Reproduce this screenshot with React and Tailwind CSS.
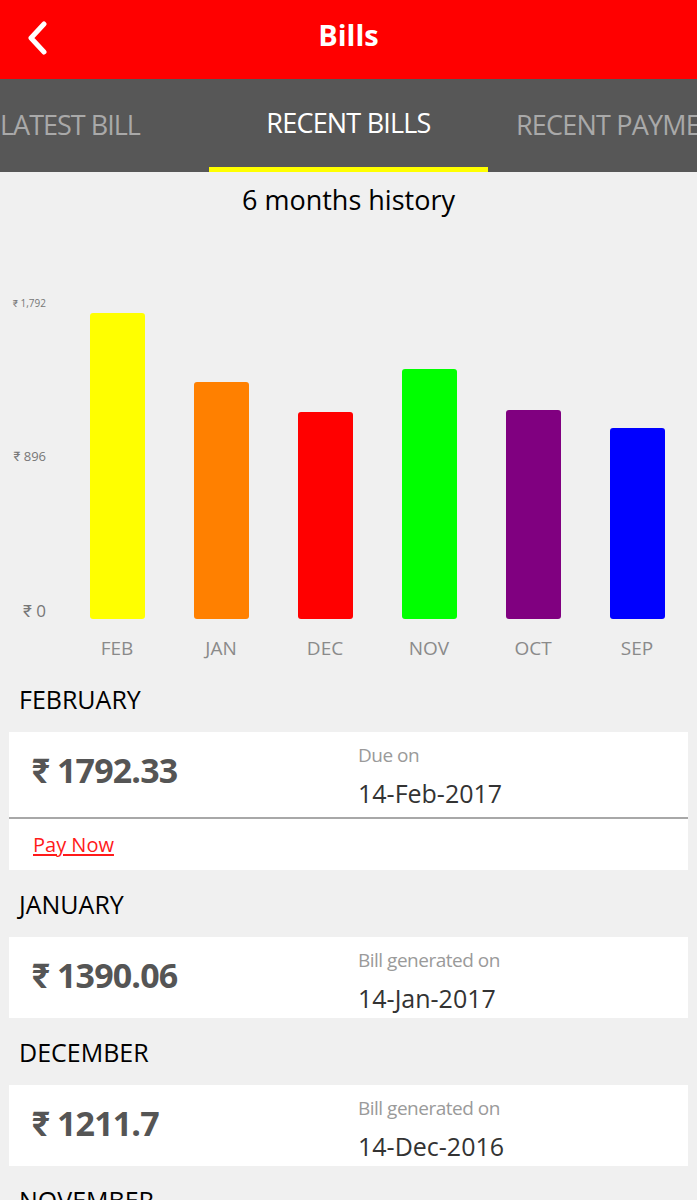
import React from "react";

const F = { fontFamily: "'Open Sans', Roboto, 'Noto Sans', sans-serif" };

const bars = [
  { m: "FEB", v: 1792.33, c: "bg-[#ffff00]" },
  { m: "JAN", v: 1390.06, c: "bg-[#ff8000]" },
  { m: "DEC", v: 1211.7, c: "bg-[#ff0000]" },
  { m: "NOV", v: 1464, c: "bg-[#00ff00]" },
  { m: "OCT", v: 1222, c: "bg-[#800080]" },
  { m: "SEP", v: 1119, c: "bg-[#0000ff]" },
];

function Card({ amount, label, date, pay }) {
  return (
    <div className="mx-[9px] bg-white">
      <div className={`flex ${pay ? "h-[87px] border-b-2 border-[#a8a8a8]" : "h-[81px]"}`}>
        <div className="w-[349px] pl-[23px] pt-[18px]">
          <div className="text-[34px] leading-[40px] font-bold text-[#555555] tracking-tight" style={F}>{amount}</div>
        </div>
        <div className="flex flex-col pt-[10px]">
          <span className="text-[19px] leading-[26px] text-[#9a9a9a] -tracking-[0.5px]" style={F}>{label}</span>
          <span className="mt-[8px] text-[25px] leading-[34px] text-[#333333]" style={F}>{date}</span>
        </div>
      </div>
      {pay && (
        <div className="h-[51px] pl-[24px] flex items-center">
          <span className="text-[20px] text-[#ff1a1a] underline underline-offset-2" style={F}>Pay Now</span>
        </div>
      )}
    </div>
  );
}

function Month({ children }) {
  return (
    <div className="h-[30px] pl-[19px] mt-[20px] mb-[17px] flex items-center text-[25px] text-black" style={F}>
      {children}
    </div>
  );
}

export default function App() {
  const maxH = 306;
  return (
    <div className="w-[697px] h-[1200px] overflow-hidden bg-[#f0f0f0]" style={F}>
      <div className="h-[79px] bg-[#ff0000] relative flex items-center justify-center pb-[10px]">
        <svg className="absolute left-[26px] top-[21px]" width="22" height="34" viewBox="0 0 22 34">
          <path d="M18 3 L5 17 L18 31" fill="none" stroke="white" strokeWidth="5" strokeLinecap="round" strokeLinejoin="round" />
        </svg>
        <span className="text-white text-[29px] font-bold" style={F}>Bills</span>
      </div>
      <div className="h-[93px] bg-[#575757] flex">
        <div className="w-[209px] flex items-center overflow-hidden">
          <span className="text-[27px] text-[#a9a9a9] whitespace-nowrap -tracking-[1px]" style={F}>LATEST BILL</span>
        </div>
        <div className="w-[279px] flex flex-col">
          <div className="flex-1 flex items-center justify-center">
            <span className="text-[27px] text-white whitespace-nowrap -tracking-[0.8px]" style={F}>RECENT BILLS</span>
          </div>
          <div className="h-[5px] bg-[#ffff00]" />
        </div>
        <div className="flex-1 flex items-center overflow-hidden pl-[28px]">
          <span className="text-[27px] text-[#a9a9a9] whitespace-nowrap -tracking-[0.8px]" style={F}>RECENT PAYMENTS</span>
        </div>
      </div>
      <div className="h-[30px] mt-[13px] flex items-center justify-center text-[27px] text-black" style={F}>
        6 months history
      </div>
      <div className="mt-[81px] flex items-start">
        <div className="w-[65px] h-[325px] pr-[19px] flex flex-col justify-between items-end text-[#777777] shrink-0">
          <span className="text-[10px] leading-[14px]">₹ 1,792</span>
          <span className="text-[13px] leading-[16px]">₹ 896</span>
          <span className="text-[17px] leading-[20px]">₹ 0</span>
        </div>
        <div className="grid grid-cols-6 w-[624px] shrink-0 h-[323px] items-end">
          {bars.map((b) => (
            <div key={b.m} className="flex justify-center">
              <div className={`w-[55px] rounded-[3px] ${b.c}`} style={{ height: Math.round((b.v / 1792.33) * maxH) }} />
            </div>
          ))}
        </div>
      </div>
      <div className="flex mt-[15px] h-[24px] mb-[25px]">
        <div className="w-[65px] shrink-0" />
        <div className="grid grid-cols-6 w-[624px] shrink-0">
          {bars.map((b) => (
            <div key={b.m} className="text-center text-[19px] leading-[24px] text-[#8a8a8a]" style={F}>{b.m}</div>
          ))}
        </div>
      </div>
      <div className="h-px" />
      <div className="-mt-px" />
      <div className="h-[30px] pl-[19px] mb-[17px] flex items-center text-[25px] text-black" style={F}>FEBRUARY</div>
      <Card amount="₹ 1792.33" label="Due on" date="14-Feb-2017" pay />
      <Month>JANUARY</Month>
      <Card amount="₹ 1390.06" label="Bill generated on" date="14-Jan-2017" />
      <Month>DECEMBER</Month>
      <Card amount="₹ 1211.7" label="Bill generated on" date="14-Dec-2016" />
      <Month>NOVEMBER</Month>
    </div>
  );
}
